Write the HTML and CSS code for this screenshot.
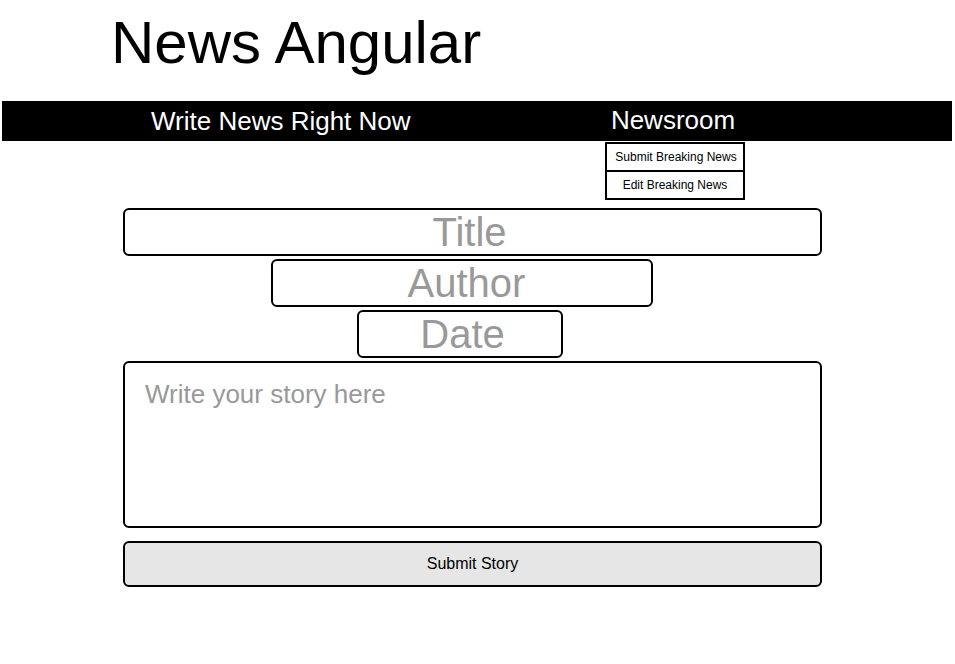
FILE: index.html
```html
<!DOCTYPE html>
<html>
<head>
<meta charset="utf-8">
<title>News Angular</title>
<link rel="stylesheet" href="styles.css">
</head>
<body>
<h1 class="site-title">News Angular</h1>
<nav class="navbar">
  <div class="nav-left">Write News Right Now</div>
  <div class="nav-menu">
    <span class="nav-menu-label">Newsroom</span>
    <ul class="dropdown">
      <li class="dropdown-item">Submit Breaking News</li>
      <li class="dropdown-item">Edit Breaking News</li>
    </ul>
  </div>
</nav>
<form class="story-form">
  <input class="field field-title" type="text" placeholder="Title">
  <input class="field field-author" type="text" placeholder="Author">
  <input class="field field-date" type="text" placeholder="Date">
  <textarea class="story" placeholder="Write your story here"></textarea>
  <button class="submit" type="button">Submit Story</button>
</form>
</body>
</html>
```
FILE: styles.css
```css
* { box-sizing: border-box; }
body {
  margin: 0;
  font-family: "Liberation Sans", Arial, sans-serif;
  color: #000;
  background: #fff;
}
.site-title {
  margin: 0;
  padding: 8px 0 0 111px;
  font-size: 60px;
  line-height: 69px;
  font-weight: normal;
}
.navbar {
  margin: 24px 3px 0 2px;
  height: 40px;
  background: #000;
  color: #fff;
  display: grid;
  grid-template-columns: 603px 140px 1fr;
  font-size: 26px;
  line-height: 40px;
}
.nav-left {
  padding-left: 149px;
  white-space: nowrap;
}
.nav-menu {
  position: relative;
  text-align: center;
  white-space: nowrap;
}
.nav-menu-label {
  display: block;
  line-height: 38px;
  padding-right: 4px;
}
.dropdown {
  position: absolute;
  top: 41px;
  left: 0;
  width: 140px;
  margin: 0;
  padding: 0;
  list-style: none;
  background: #fff;
  border: 2px solid #000;
  color: #000;
  font-size: 12px;
  line-height: 26px;
  text-align: center;
}
.dropdown-item {
  height: 26px;
  padding-left: 2px;
}
.dropdown-item + .dropdown-item {
  border-top: 2px solid #000;
  height: 28px;
  padding-left: 0;
}
.story-form {
  width: 699px;
  margin: 67px 0 0 123px;
  display: flex;
  flex-direction: column;
  align-items: center;
}
.field {
  height: 48px;
  border: 2px solid #000;
  border-radius: 6px;
  font-family: inherit;
  font-size: 40px;
  text-align: center;
  padding: 0 4px;
  outline: none;
  background: #fff;
}
.field + .field { margin-top: 3px; }
.field-title { width: 699px; padding-right: 10px; }
.field-author { width: 382px; margin-right: 22px; padding: 0 4px 0 14px; }
.field-date { width: 206px; margin-right: 26px; padding: 0 4px 0 10px; }
.field::placeholder,
.story::placeholder {
  color: #999;
  opacity: 1;
}
.story {
  margin-top: 3px;
  width: 699px;
  height: 167px;
  border: 2px solid #000;
  border-radius: 6px;
  font-family: inherit;
  font-size: 26px;
  padding: 16px 20px;
  resize: none;
  outline: none;
}
.submit {
  margin-top: 13px;
  width: 699px;
  height: 46px;
  border: 2px solid #000;
  border-radius: 6px;
  background: #e6e6e6;
  font-family: inherit;
  font-size: 16px;
  color: #000;
}
```
